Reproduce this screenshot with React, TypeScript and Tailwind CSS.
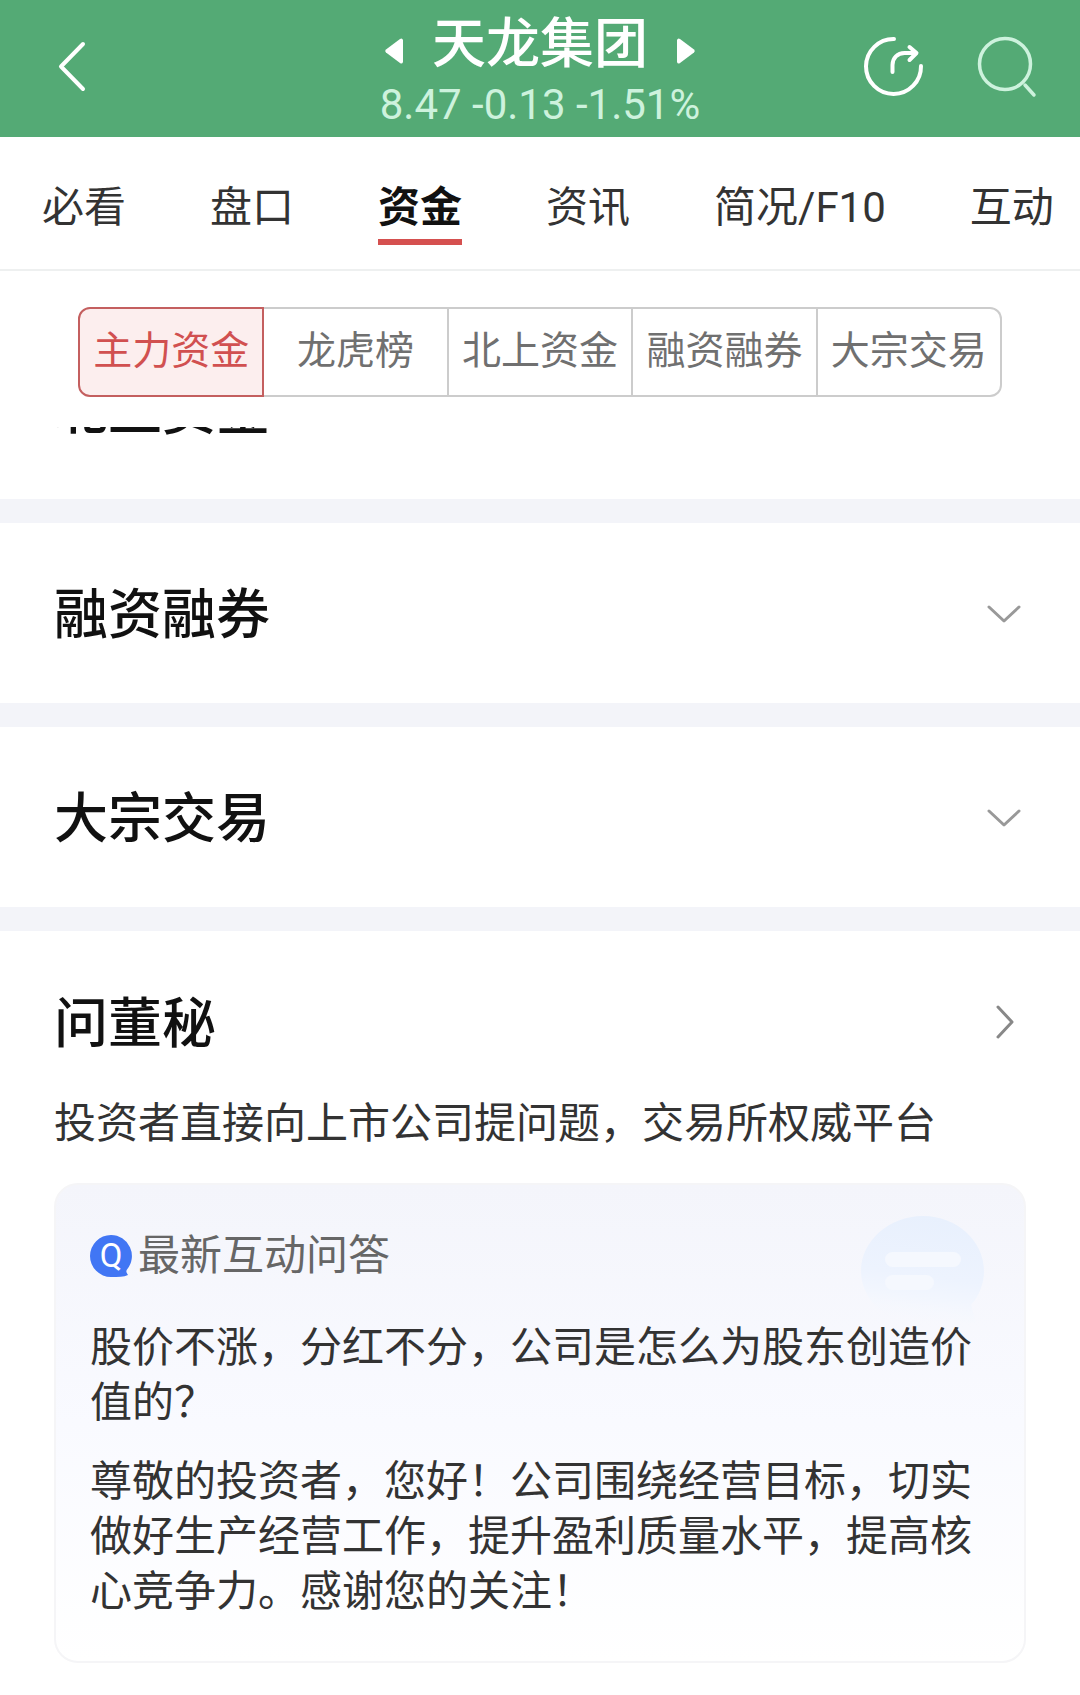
import { useState } from 'react'
import clsx from 'clsx'

const TABS = ['必看', '盘口', '资金', '资讯', '简况/F10', '互动']
const SEGMENTS = ['主力资金', '龙虎榜', '北上资金', '融资融券', '大宗交易']

function StockHeader() {
    return (
        <header className="grid grid-cols-[1fr_auto_1fr] items-center h-[137px] bg-[#54aa75] text-white">
            <button aria-label="返回" className="justify-self-start ml-12 px-2 pb-1">
                <svg className="w-8 h-14" viewBox="0 0 32 56" fill="none" stroke="currentColor" strokeWidth="4" strokeLinecap="round" strokeLinejoin="round">
                    <path d="M27 5L5 27.500L27 50" />
                </svg>
            </button>

            {/* Stock name and quote */}
            <div className="flex flex-col items-center pt-2">
                <div className="flex items-center gap-7">
                    <button aria-label="上一只" className="pt-3">
                        <svg className="w-5 h-7" viewBox="0 0 20 28" fill="currentColor">
                            <path d="M19 3v22a2 2 0 0 1-3 1L2 15.500a2 2 0 0 1 0-3L16 2a2 2 0 0 1 3 1z" />
                        </svg>
                    </button>
                    <h1 className="text-[54px] leading-[64px] font-medium">天龙集团</h1>
                    <button aria-label="下一只" className="pt-3">
                        <svg className="w-5 h-7" viewBox="0 0 20 28" fill="currentColor">
                            <path d="M1 3v22a2 2 0 0 0 3 1L18 15.500a2 2 0 0 0 0-3L4 2a2 2 0 0 0-3 1z" />
                        </svg>
                    </button>
                </div>
                <p className="text-[42px] leading-[56px] text-[#cdf2dd]">8.47 -0.13 -1.51%</p>
            </div>

            <div className="flex items-center justify-self-end gap-12 mr-[42px] pb-1">
                <button aria-label="分享">
                    <svg className="size-16" viewBox="0 0 64 64" fill="none" stroke="currentColor" strokeWidth="4" strokeLinecap="round" strokeLinejoin="round">
                        <path d="M32 4A27.500 27.500 0 1 0 59 31" />
                        <path d="M30.500 37v-7c0-7 5-12 12-12h11" />
                        <path d="M47.500 12L54.500 18L47.500 25" />
                    </svg>
                </button>
                <button aria-label="搜索" className="text-[#cdf2dd]">
                    <svg className="size-16" viewBox="0 0 64 64" fill="none" stroke="currentColor" strokeWidth="3.500" strokeLinecap="round">
                        <circle cx="31" cy="29" r="25.500" />
                        <path d="M51 50L60 60" />
                    </svg>
                </button>
            </div>
        </header>
    )
}

function MainTabs() {
    const [active, setActive] = useState('资金')
    return (
        <nav className="flex gap-[84px] px-[42px] pt-10 pb-6 overflow-hidden border-b-2 border-[#eef0f0]">
            {TABS.map(tab => (
                <button
                    key={tab}
                    onClick={() => setActive(tab)}
                    className={clsx(
                        'shrink-0 text-[42px] leading-[62px] border-b-6',
                        tab === active ? 'font-bold text-[#111111] border-[#d5504f]' : 'text-[#333333] border-transparent'
                    )}
                >
                    {tab}
                </button>
            ))}
        </nav>
    )
}

function FundSegments() {
    const [active, setActive] = useState('主力资金')
    return (
        <div className="flex px-[78px] pt-9 pb-[30px]">
            {SEGMENTS.map(segment => (
                <button
                    key={segment}
                    onClick={() => setActive(segment)}
                    className={clsx(
                        'flex-1 h-[90px] pb-0.5 text-[39px] whitespace-nowrap border-y-2 border-r-2 first:border-l-2 first:rounded-l-xl last:rounded-r-xl',
                        segment === active ? 'bg-[#fceeee] text-[#d15050] border-[#c45f5f]' : 'text-[#707070] border-[#cccccc]'
                    )}
                >
                    {segment}
                </button>
            ))}
        </div>
    )
}

function CollapsedSection({ title }: { title: string }) {
    return (
        <button className="flex items-center justify-between shrink-0 w-full h-[180px] pl-[54px] pr-[58px] pt-0.5 text-left">
            <h2 className="pt-1 text-[54px] leading-[60px] font-medium text-[#111111]">{title}</h2>
            <svg className="w-9 h-5" viewBox="0 0 36 20" fill="none" stroke="#999999" strokeWidth="3" strokeLinecap="round" strokeLinejoin="round">
                <path d="M3 3L18 17L33 3" />
            </svg>
        </button>
    )
}

function Divider() {
    return <div className="h-6 bg-[#f3f4f9]" />
}

function QuestionCard() {
    return (
        <article className="relative mt-[31px] px-[34px] pt-[43px] pb-[42px] rounded-3xl border-2 border-[#f5f5f7] bg-linear-to-b from-[#f4f5fb] via-[#f9faff] to-white text-[42px] leading-[55px] text-[#333333]">
            {/* Bubble watermark */}
            <svg className="absolute top-[31px] right-[39px] w-[124px] h-[108px]" viewBox="0 0 124 108" aria-hidden="true">
                <defs>
                    <linearGradient id="bubble" x1="0.6" y1="0" x2="0.45" y2="1">
                        <stop offset="0" stopColor="#e8f0fd" />
                        <stop offset="0.55" stopColor="#edf3fe" />
                        <stop offset="0.75" stopColor="#f2f6fe" />
                        <stop offset="1" stopColor="#f7f9fe" stopOpacity="0" />
                    </linearGradient>
                </defs>
                <path d="M62 0C96 0 123 25 123 55C123 68 118 80 110 89L115 107C106 107 98 106 91 103C82 107 72 109 62 109C28 109 0 85 0 55C0 25 28 0 62 0z" fill="url(#bubble)" />
                <rect x="24" y="36" width="76" height="15" rx="7.500" fill="#f5f8fe" />
                <rect x="24" y="59" width="49" height="15" rx="7.500" fill="#f5f8fe" />
            </svg>

            <div className="flex items-center gap-1.5 text-[#666666]">
                <svg className="size-[42px]" viewBox="0 0 42 42" aria-hidden="true">
                    <path d="M21 0a21 21 0 0 1 16 34.500c-1 1.500-1 2.500 1 5.500c-4 2-10 2-17 2a21 21 0 0 1 0-42z" fill="#4176f4" />
                    <text x="21" y="32" textAnchor="middle" fontSize="33" fill="#ffffff">Q</text>
                </svg>
                <h3>最新互动问答</h3>
            </div>
            <p className="mt-[37px]">股价不涨，分红不分，公司是怎么为股东创造价值的？</p>
            <p className="mt-6">尊敬的投资者，您好！公司围绕经营目标，切实做好生产经营工作，提升盈利质量水平，提高核心竞争力。感谢您的关注！</p>
        </article>
    )
}

function BoardSecretary() {
    return (
        <section className="px-[54px] pt-[58px] pb-8">
            <a href="#board-secretary" className="flex items-center justify-between pr-[9px]">
                <h2 className="pt-1.5 text-[54px] leading-[60px] font-medium text-[#111111]">问董秘</h2>
                <svg className="w-6 h-9" viewBox="0 0 24 36" fill="none" stroke="#888888" strokeWidth="3" strokeLinecap="round" strokeLinejoin="round">
                    <path d="M5 3L19 18L5 33" />
                </svg>
            </a>
            <p className="mt-[41px] text-[42px] leading-[56px] text-[#333333]">投资者直接向上市公司提问题，交易所权威平台</p>
            <QuestionCard />
        </section>
    )
}

export default function App() {
    return (
        <div lang="zh-CN" className="min-h-screen bg-white font-[Roboto,'Noto_Sans_CJK_SC',sans-serif]">
            <StockHeader />
            <MainTabs />
            <FundSegments />
            <main>
                {/* Partly scrolled under the tab bar */}
                <div className="flex flex-col justify-end h-[72px] overflow-hidden">
                    <CollapsedSection title="北上资金" />
                </div>
                <Divider />
                <CollapsedSection title="融资融券" />
                <Divider />
                <CollapsedSection title="大宗交易" />
                <Divider />
                <BoardSecretary />
            </main>
        </div>
    )
}
